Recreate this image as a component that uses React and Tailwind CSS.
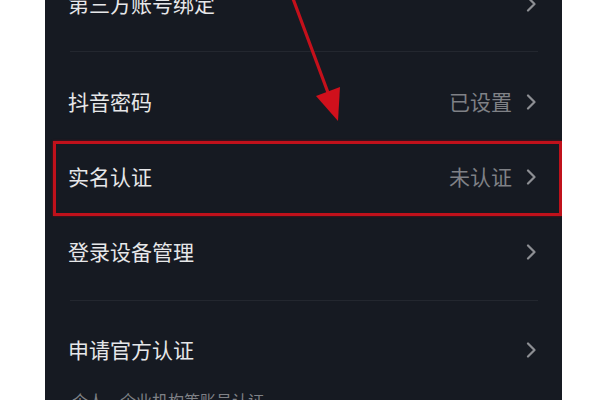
import React from "react";

function Chevron() {
  return (
    <svg width="10" height="16" viewBox="0 0 10 16" className="ml-[14px] shrink-0">
      <path d="M2 1.5 L8.5 8 L2 14.5" fill="none" stroke="#8d8f94" strokeWidth="2.2" strokeLinecap="round" strokeLinejoin="round" />
    </svg>
  );
}

function Row({ label, value }) {
  return (
    <div className="flex h-[75px] items-center justify-between pl-[23px] pr-[26px]">
      <span className="text-[21px] leading-none text-[#e6e7e9]">{label}</span>
      <div className="flex items-center">
        {value && <span className="text-[21px] leading-none text-[#7f8186]">{value}</span>}
        <Chevron />
      </div>
    </div>
  );
}

function Divider() {
  return <div className="ml-[25px] mr-[24px] h-px bg-[#23272f]" />;
}

export default function App() {
  return (
    <div
      className="h-[400px] w-[600px] overflow-hidden bg-white"
      style={{ fontFamily: '"Noto Sans CJK SC", "Noto Sans", sans-serif' }}
    >
      <div className="relative ml-[45px] h-[400px] w-[517px] overflow-hidden bg-[#161a22]">
        <div className="mt-[-34px] flex flex-col">
          <Row label="第三方账号绑定" />
          <div className="pt-[10px] pb-[12px]">
            <Divider />
          </div>
          <Row label="抖音密码" value="已设置" />
          <Row label="实名认证" value="未认证" />
          <Row label="登录设备管理" />
          <div className="pt-[11px] pb-[11px]">
            <Divider />
          </div>
          <Row label="申请官方认证" />
          <div className="pl-[27px] pt-[5px] text-[16px] leading-none text-[#7f8186]">个人、企业机构等账号认证</div>
        </div>

        <div className="pointer-events-none absolute left-[8px] top-[141px] h-[75px] w-[509px] border-[3px] border-[#c0111b] shadow-[0_0_2px_#7a0a10]" />

        <svg className="pointer-events-none absolute left-0 top-0" width="517" height="400" viewBox="45 0 517 400">
          <line x1="292" y1="-4" x2="330" y2="98" stroke="#c4101b" strokeWidth="3.2" strokeLinecap="round" />
          <polygon points="338,121 316,96 340,87" fill="#d0101c" />
        </svg>
      </div>
    </div>
  );
}
